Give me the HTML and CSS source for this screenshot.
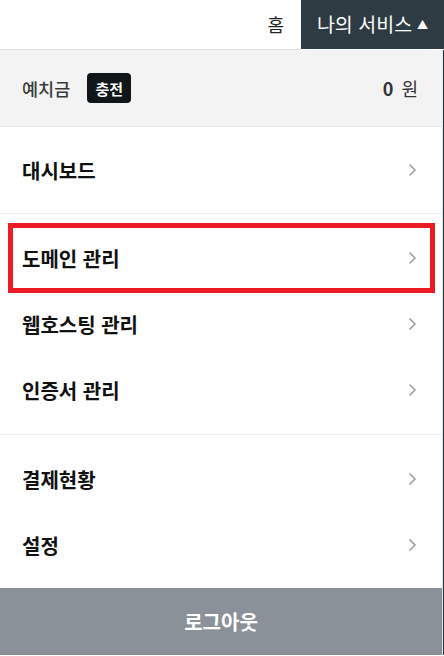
FILE: index.html
```html
<!DOCTYPE html>
<html lang="ko">
<head>
<meta charset="utf-8">
<title>나의 서비스</title>
<link rel="stylesheet" href="styles.css">
</head>
<body>
<header class="topbar">
  <div class="topbar-left">
    <a class="home-link" href="#">홈</a>
  </div>
  <button class="service-btn" type="button">나의 서비스 <span class="caret">▲</span></button>
</header>
<nav class="menu">
  <div class="menu-inner">
    <section class="deposit">
      <div class="deposit-left">
        <span class="deposit-label">예치금</span>
        <span class="badge">충전</span>
      </div>
      <div class="deposit-amount"><strong>0</strong> 원</div>
    </section>
    <ul class="group group-first">
      <li class="item"><span>대시보드</span><svg class="chev" width="9" height="14" viewBox="0 0 9 14"><path d="M1.5 1.5 L7 7 L1.5 12.5" fill="none" stroke="#9a9a9a" stroke-width="1.5"/></svg></li>
    </ul>
    <ul class="group">
      <li class="item"><span>도메인 관리</span><svg class="chev" width="9" height="14" viewBox="0 0 9 14"><path d="M1.5 1.5 L7 7 L1.5 12.5" fill="none" stroke="#9a9a9a" stroke-width="1.5"/></svg><div class="highlight"></div></li>
      <li class="item"><span>웹호스팅 관리</span><svg class="chev" width="9" height="14" viewBox="0 0 9 14"><path d="M1.5 1.5 L7 7 L1.5 12.5" fill="none" stroke="#9a9a9a" stroke-width="1.5"/></svg></li>
      <li class="item"><span>인증서 관리</span><svg class="chev" width="9" height="14" viewBox="0 0 9 14"><path d="M1.5 1.5 L7 7 L1.5 12.5" fill="none" stroke="#9a9a9a" stroke-width="1.5"/></svg></li>
    </ul>
    <ul class="group group-last">
      <li class="item"><span>결제현황</span><svg class="chev" width="9" height="14" viewBox="0 0 9 14"><path d="M1.5 1.5 L7 7 L1.5 12.5" fill="none" stroke="#9a9a9a" stroke-width="1.5"/></svg></li>
      <li class="item"><span>설정</span><svg class="chev" width="9" height="14" viewBox="0 0 9 14"><path d="M1.5 1.5 L7 7 L1.5 12.5" fill="none" stroke="#9a9a9a" stroke-width="1.5"/></svg></li>
    </ul>
    <button class="logout" type="button">로그아웃</button>
  </div>
</nav>
</body>
</html>
```
FILE: styles.css
```css
* { box-sizing: border-box; }
html, body {
  margin: 0;
  padding: 0;
  background: #fff;
  font-family: "Noto Sans CJK KR", "Noto Sans", sans-serif;
  color: #111;
}
body { width: 444px; height: 656px; overflow: hidden; }

.topbar {
  display: flex;
  height: 50px;
}
.topbar-left {
  flex: 1;
  display: flex;
  justify-content: flex-end;
  align-items: center;
  border-bottom: 1px solid #dcdcdc;
  padding-right: 17px;
}
.home-link {
  color: #222;
  text-decoration: none;
  font-size: 18px;
  line-height: 1;
  margin-top: -2px;
}
.service-btn {
  width: 143px;
  height: 49px;
  border: 0;
  margin: 0;
  padding: 0 0 2px 0;
  background: #2e3b43;
  color: #fff;
  font-family: inherit;
  font-size: 19.5px;
  display: flex;
  align-items: center;
  justify-content: center;
  gap: 5px;
}
.caret { font-size: 11px; }

.menu {
  width: 444px;
  border-right: 1px solid #26343f;
}
.menu-inner {
  border-right: 1px solid #e4e4e4;
}

.deposit {
  height: 77px;
  background: #f3f3f3;
  border-bottom: 1px solid #e6e6e6;
  display: flex;
  align-items: center;
  justify-content: space-between;
  padding: 0 24px 0 22px;
}
.deposit-left { display: flex; align-items: center; gap: 17px; }
.deposit-label { font-size: 17.5px; color: #3a3a3a; font-weight: 500; }
.badge {
  background: #111618;
  color: #fff;
  font-size: 15px;
  font-weight: 700;
  border-radius: 4px;
  height: 30px;
  width: 44px;
  display: flex;
  align-items: center;
  justify-content: center;
}
.deposit-amount { font-size: 18px; color: #333; }
.deposit-amount strong { font-weight: 700; margin-right: 3px; }

.group {
  list-style: none;
  margin: 0;
  padding: 11px 0;
  border-bottom: 1px solid #e8eaee;
}
.group-first { padding: 10px 0; }
.group-last { padding: 11px 0 10px; border-bottom: 0; }
.item {
  position: relative;
  height: 66px;
  display: flex;
  align-items: center;
  justify-content: space-between;
  padding: 0 25px 0 22px;
  font-size: 20px;
  font-weight: 700;
  color: #111;
}
.chev { display: block; }
.highlight {
  position: absolute;
  left: 8px;
  top: -2px;
  width: 427px;
  height: 70px;
  border: 5px solid #ed1c24;
}

.logout {
  display: flex;
  width: 100%;
  height: 67px;
  border: 0;
  margin: 0;
  background: #8b9199;
  color: #fff;
  font-family: inherit;
  font-size: 20px;
  font-weight: 700;
  align-items: center;
  justify-content: center;
}
```
